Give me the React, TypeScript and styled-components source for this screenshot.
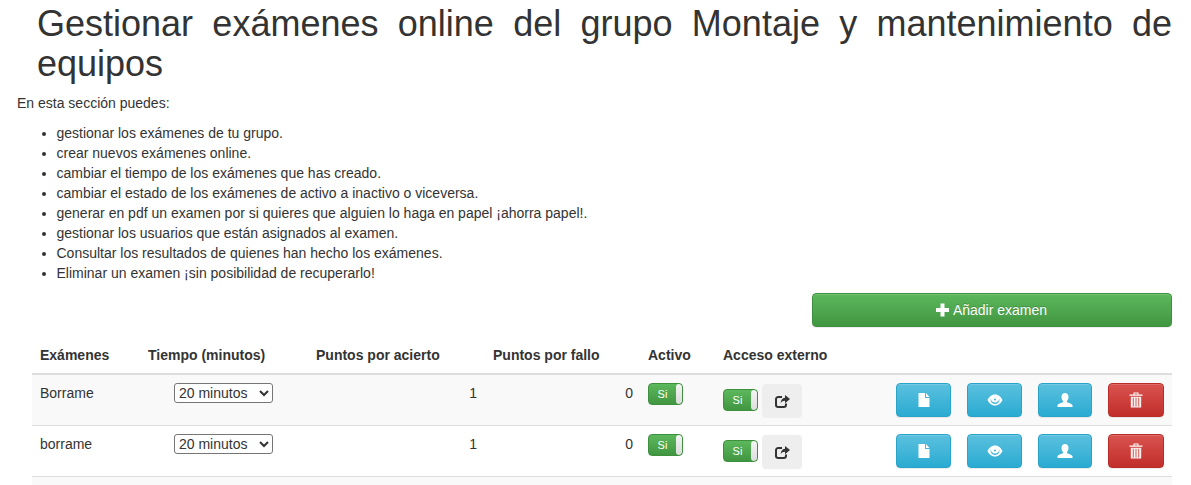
import type { FC, ReactNode } from "react";
import styled, { createGlobalStyle, css } from "styled-components";

const GlobalStyle = createGlobalStyle`
  html, body {
    margin: 0;
    padding: 0;
    background: #fff;
    overflow: hidden;
  }

  body {
    font-family: "Liberation Sans", Arial, sans-serif;
    font-size: 14px;
    line-height: 20px;
    color: #333;
  }
`;

const Page = styled.div`
  width: 1191px;
  height: 485px;
  overflow: hidden;
  box-sizing: border-box;
  padding: 4px 19px 0 17px;
`;

const Title = styled.h1`
  margin: 0 0 8px 20px;
  font-size: 36px;
  font-weight: 500;
  line-height: 40px;
  text-align: justify;
  color: #333;
`;

const Intro = styled.p`
  margin: 0 0 10px;
  padding-top: 1px;
`;

const Tasks = styled.ul`
  margin: 0 0 10px;
  padding: 0 0 0 39.5px;
`;

const AddRow = styled.div`
  display: flex;
  justify-content: flex-end;
  margin-top: 10px;
`;

const greenButton = css`
  background-image: linear-gradient(to bottom, #5cb85c 0%, #419641 100%);
  border: 1px solid #3e8f3e;
  color: #fff;
  text-shadow: 0 -1px 0 rgba(0, 0, 0, 0.2);
`;

const AddButton = styled.button`
  ${greenButton}
  width: 360px;
  height: 34px;
  padding: 0 1px 0 0;
  border-radius: 4px;
  font: inherit;
  box-shadow: inset 0 1px 0 rgba(255, 255, 255, 0.15), 0 1px 1px rgba(0, 0, 0, 0.075);
  display: flex;
  align-items: center;
  justify-content: center;
  gap: 4px;
`;

const Table = styled.table`
  width: 1140px;
  margin: 10px 0 0 15px;
  border-collapse: separate;
  border-spacing: 0;
  table-layout: fixed;
`;

const HeadCell = styled.th`
  height: 38px;
  padding: 8px;
  box-sizing: border-box;
  text-align: left;
  font-weight: 700;
  vertical-align: bottom;
  border-bottom: 2px solid #ddd;
  white-space: nowrap;
`;

const Row = styled.tr<{ $striped?: boolean }>`
  background: ${({ $striped }) => ($striped ? "#f9f9f9" : "#fff")};
`;

const Cell = styled.td<{ $align?: "left" | "center" | "right" }>`
  height: 51px;
  padding: 8px 8px 7px;
  box-sizing: border-box;
  vertical-align: top;
  border-bottom: 1px solid #ddd;
  text-align: ${({ $align }) => $align ?? "left"};
`;

const MissesCell = styled(Cell)`
  padding-right: 7px;
`;

const Select = styled.select`
  width: 99px;
  height: 20px;
  margin-right: 1px;
  padding: 0;
  font-family: inherit;
  font-size: 14px;
  line-height: 18px;
  color: #333;
  background: #fff;
  border: 1px solid #767676;
  border-radius: 3px;
  display: inline-block;
  vertical-align: top;
`;

const Switch = styled.div<{ $drop?: boolean }>`
  ${greenButton}
  width: 35px;
  height: 22px;
  box-sizing: border-box;
  border-radius: 4px;
  display: flex;
  overflow: hidden;
  text-shadow: none;
  margin-top: ${({ $drop }) => ($drop ? "6px" : "0")};
  flex: none;
`;

const SwitchLabel = styled.span`
  flex: 1;
  font-size: 11px;
  line-height: 20px;
  text-align: center;
`;

const SwitchHandle = styled.span`
  width: 6px;
  background-image: linear-gradient(to bottom, #f5f5f5, #dcdcdc);
  border-radius: 3px;
`;

const ExternalAccess = styled.div`
  display: flex;
  align-items: flex-start;
  gap: 4px;
`;

const ShareButton = styled.button`
  width: 40px;
  height: 34px;
  margin-top: 1px;
  padding: 0;
  border: 0;
  border-radius: 4px;
  background: #eee;
  display: flex;
  align-items: center;
  justify-content: center;
`;

const ActionButton = styled.button<{ $danger?: boolean }>`
  width: 100%;
  height: 34px;
  padding: 0;
  border-radius: 4px;
  display: flex;
  align-items: center;
  justify-content: center;
  box-shadow: inset 0 1px 0 rgba(255, 255, 255, 0.15), 0 1px 1px rgba(0, 0, 0, 0.075);
  ${({ $danger }) =>
    $danger
      ? css`
          background-image: linear-gradient(to bottom, #d9534f 0%, #c12e2a 100%);
          border: 1px solid #b92c28;
        `
      : css`
          background-image: linear-gradient(to bottom, #5bc0de 0%, #2aabd2 100%);
          border: 1px solid #28a4c9;
        `}
`;

const Glyph: FC<{ children: ReactNode; size?: number }> = ({ children, size = 16 }) => (
  <svg width={size} height={size} viewBox="0 0 16 16" fill="#fff" aria-hidden="true">
    {children}
  </svg>
);

const FileIcon = () => (
  <Glyph>
    <path d="M2.500 1H9v5h4.500v9h-11z" />
    <path d="M10 1l3.500 4H10z" />
  </Glyph>
);

const EyeIcon = () => (
  <Glyph>
    <path
      fillRule="evenodd"
      d="M8 2.500c3.600 0 6.300 2.600 7.500 5.500-1.200 2.900-3.900 5.500-7.500 5.500S1.700 10.900.5 8C1.700 5.100 4.400 2.500 8 2.500zM3.700 6.200A4.400 4.400 0 0 0 8 12a4.400 4.400 0 0 0 4.300-5.800 3.900 3.900 0 0 1-8.600 0z"
    />
    <circle cx="8" cy="6.800" r="2.500" />
    <circle cx="8" cy="7.500" r="1" fill="#3fb2d6" />
  </Glyph>
);

const UserIcon = () => (
  <Glyph>
    <path d="M8 1c2 0 3.500 1.500 3.500 4 0 1.700-.7 3.100-1.500 3.900v1.300c2 .8 4.900 1.500 5.500 2.900V15H.5v-1.900c.6-1.400 3.500-2.100 5.500-2.900V8.900C5.200 8.100 4.500 6.700 4.500 5 4.500 2.500 6 1 8 1z" />
  </Glyph>
);

const TrashIcon = () => (
  <Glyph>
    <path d="M1.500 2.500h13v1.300h-13zM5.500.5h5v2h-1V1.500h-3v1h-1z" />
    <path d="M2.800 4.800h10.400V15.500H2.800z" fillOpacity="0.92" />
    <path d="M4.800 5.800h1v8.700h-1zM7.500 5.800h1v8.700h-1zM10.200 5.800h1v8.700h-1z" fill="#d0605a" />
  </Glyph>
);

const PlusIcon = () => (
  <svg width="13" height="14" viewBox="0 0 13 14" fill="#fff" aria-hidden="true">
    <path d="M4.500 .5h4v4.500H13v4H8.500v4.500h-4V9H0V5h4.500z" />
  </svg>
);

const ShareIcon = () => (
  <svg width="15" height="14" viewBox="0 -0.5 15 14" aria-hidden="true">
    <path
      d="M7 2.500H3.200A2.200 2.200 0 0 0 1 4.700v5.600a2.200 2.200 0 0 0 2.200 2.200h5.600a2.200 2.200 0 0 0 2.200-2.200V9"
      fill="none"
      stroke="#333"
      strokeWidth="2"
    />
    <path d="M10 .5L15 4.600 10 8.700V6.300c-2 0-3.300.7-4.300 2.400 0-3 1.500-5.200 4.300-5.500z" fill="#333" />
  </svg>
);

const tasks = [
  "gestionar los exámenes de tu grupo.",
  "crear nuevos exámenes online.",
  "cambiar el tiempo de los exámenes que has creado.",
  "cambiar el estado de los exámenes de activo a inactivo o viceversa.",
  "generar en pdf un examen por si quieres que alguien lo haga en papel ¡ahorra papel!.",
  "gestionar los usuarios que están asignados al examen.",
  "Consultar los resultados de quienes han hecho los exámenes.",
  "Eliminar un examen ¡sin posibilidad de recuperarlo!",
];

const exams = [
  { name: "Borrame", hits: 1, misses: 0 },
  { name: "borrame", hits: 1, misses: 0 },
];

const columnWidths = [108, 168, 177, 155, 75, 173, 71, 71, 70, 72];

const App: FC = () => {
  return (
    <Page>
      <GlobalStyle />
      <Title>Gestionar exámenes online del grupo Montaje y mantenimiento de equipos</Title>
      <Intro>En esta sección puedes:</Intro>
      <Tasks>
        {tasks.map((task) => (
          <li key={task}>{task}</li>
        ))}
      </Tasks>

      <AddRow>
        <AddButton>
          <PlusIcon />
          Añadir examen
        </AddButton>
      </AddRow>

      <Table>
        <colgroup>
          {columnWidths.map((width, index) => (
            <col key={index} width={width} />
          ))}
        </colgroup>
        <thead>
          <tr>
            <HeadCell>Exámenes</HeadCell>
            <HeadCell>Tiempo (minutos)</HeadCell>
            <HeadCell>Puntos por acierto</HeadCell>
            <HeadCell>Puntos por fallo</HeadCell>
            <HeadCell>Activo</HeadCell>
            <HeadCell>Acceso externo</HeadCell>
            <HeadCell colSpan={4} />
          </tr>
        </thead>
        <tbody>
          {exams.map((exam, index) => (
            <Row key={exam.name} $striped={index % 2 === 0}>
              <Cell>{exam.name}</Cell>
              <Cell $align="center">
                <Select defaultValue="20">
                  <option value="20">20 minutos</option>
                </Select>
              </Cell>
              <Cell $align="right">{exam.hits}</Cell>
              <MissesCell $align="right">{exam.misses}</MissesCell>
              <Cell>
                <Switch>
                  <SwitchLabel>Si</SwitchLabel>
                  <SwitchHandle />
                </Switch>
              </Cell>
              <Cell>
                <ExternalAccess>
                  <Switch $drop>
                    <SwitchLabel>Si</SwitchLabel>
                    <SwitchHandle />
                  </Switch>
                  <ShareButton>
                    <ShareIcon />
                  </ShareButton>
                </ExternalAccess>
              </Cell>
              <Cell>
                <ActionButton>
                  <FileIcon />
                </ActionButton>
              </Cell>
              <Cell>
                <ActionButton>
                  <EyeIcon />
                </ActionButton>
              </Cell>
              <Cell>
                <ActionButton>
                  <UserIcon />
                </ActionButton>
              </Cell>
              <Cell>
                <ActionButton $danger>
                  <TrashIcon />
                </ActionButton>
              </Cell>
            </Row>
          ))}
          <Row $striped>
            <Cell colSpan={10} />
          </Row>
        </tbody>
      </Table>
    </Page>
  );
};

export default App;
